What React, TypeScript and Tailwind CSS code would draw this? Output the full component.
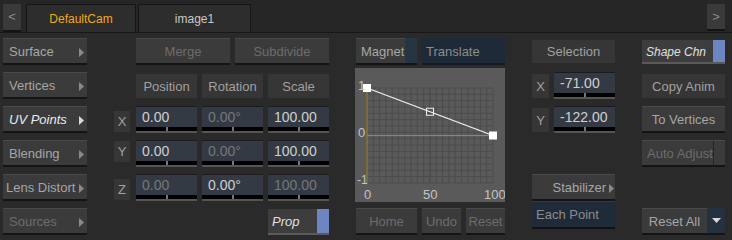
import React from 'react';

const FONT = {fontFamily: '"Liberation Sans", Arial, sans-serif'};

function Arrow({color = '#8a8a8a'}: {color?: string}) {
  return (
    <svg width="5" height="9" viewBox="0 0 5 9" aria-hidden="true">
      <polygon points="0,0 5,4.5 0,9" fill={color} />
    </svg>
  );
}

// raised grey push button
function Btn({
  label,
  className = '',
  arrow,
  italic,
  dim,
}: {
  label: string;
  className?: string;
  arrow?: boolean;
  italic?: boolean;
  dim?: boolean;
}) {
  return (
    <div
      className={`h-[27px] flex items-center pt-[2px] bg-[#3b3b3b] border-t border-t-[#4a4a4a] border-b-2 border-b-[#141414] text-[13px] ${
        arrow ? 'justify-between pl-[6px] pr-[3px]' : 'justify-center'
      } ${italic ? 'italic text-[#ececec]' : dim ? 'text-[#6c6c6c]' : 'text-[#a6a6a6]'} ${className}`}
    >
      <span className="whitespace-nowrap">{label}</span>
      {arrow && <Arrow color={italic ? '#d8d8d8' : '#8a8a8a'} />}
    </div>
  );
}

function Label({label, className = ''}: {label: string; className?: string}) {
  return (
    <div
      className={`flex items-center justify-center pt-[1px] bg-[#363636] text-[13px] text-[#a0a0a0] whitespace-nowrap ${className}`}
    >
      {label}
    </div>
  );
}

function Field({value, dim}: {value: string; dim?: boolean}) {
  return (
    <div className="h-[27px] flex flex-col">
      <div className="h-[1px] bg-[#1c1c1c]" />
      <div
        className={`h-[20px] bg-[#343a44] flex items-center pl-[6px] text-[14px] ${
          dim ? 'text-[#767676]' : 'text-[#cfcfcf]'
        }`}
      >
        {value}
      </div>
      <div className="h-[4px] bg-black flex justify-center">
        <div className="w-[2px] h-full bg-[#777]" />
      </div>
      <div className="h-[2px] bg-[#555]" />
    </div>
  );
}

function Toggle({label, className = ''}: {label: string; className?: string}) {
  return (
    <div className={`flex border-b-2 border-b-[#5a5a5a] ${className}`}>
      <div className="flex-1 bg-[#3d3d3d] flex items-center pl-[4px] pt-[1px] italic text-[#e0e0e0] whitespace-nowrap">
        {label}
      </div>
      <div className="w-[12px] bg-[#6d86c2]" />
    </div>
  );
}

function Graph() {
  const x0 = 12;
  const x1 = 138;
  const y0 = 20;
  const y1 = 115;
  const cols = 20;
  const rows = 15;
  const vlines = Array.from({length: cols + 1}, (_, i) => x0 + ((x1 - x0) * i) / cols);
  const hlines = Array.from({length: rows + 1}, (_, i) => y0 + ((y1 - y0) * i) / rows);
  const yZero = (y0 + y1) / 2;
  return (
    <svg width="150" height="134" viewBox="0 0 150 134" className="block bg-[#5a5a5a]">
      {vlines.map((x, i) => (
        <line key={`v${i}`} x1={x} y1={y0} x2={x} y2={y1} stroke={i === 10 ? '#444' : '#4c4c4c'} strokeWidth="1" />
      ))}
      {hlines.map((y, i) => (
        <line key={`h${i}`} x1={x0} y1={y} x2={x1} y2={y} stroke="#4c4c4c" strokeWidth="1" />
      ))}
      <line x1={x0} y1={y0} x2={x0} y2={y1} stroke="#a5862f" strokeWidth="1" />
      <line x1={x0} y1={yZero} x2={x1} y2={yZero} stroke="#a5862f" strokeWidth="1" />
      <line x1={x0} y1={y0} x2={x1} y2={yZero} stroke="#f2f2f2" strokeWidth="1.3" />
      <rect x={x0 - 4} y={y0 - 4} width="8" height="8" fill="#fff" />
      <rect x={x1 - 4} y={yZero - 4} width="8" height="8" fill="#fff" />
      <rect x={(x0 + x1) / 2 - 3.5} y={(y0 + yZero) / 2 - 3.5} width="7" height="7" fill="none" stroke="#eee" strokeWidth="1" />
      <g fill="#c4c4c4" fontSize="13" style={FONT}>
        <text x="3" y="22">1</text>
        <text x="3" y={yZero + 1}>0</text>
        <text x="2" y={y1 + 1} fontSize="12">-1</text>
        <text x="9" y="131">0</text>
        <text x="68" y="131">50</text>
        <text x="129" y="131">100</text>
      </g>
    </svg>
  );
}

export default function App() {
  return (
    <div className="w-[732px] h-[240px] bg-[#2a2a2a] overflow-hidden" style={FONT}>
      {/* Tab bar */}
      <div className="h-[33px] bg-[#262626] border-b border-b-[#181818] flex items-end pl-[3px] pr-[7px]">
        <div className="w-[18px] h-[28px] bg-[#3a3a3a] border-b-2 border-b-[#141414] flex items-center justify-center text-[13px] text-[#8a8a8a]">
          &lt;
        </div>
        <div className="ml-[5px] w-[110px] h-[28px] bg-[#2d2d2d] border border-b-0 border-[#151515] flex items-center justify-center text-[12px] text-[#f0a81c]">
          DefaultCam
        </div>
        <div className="ml-[2px] w-[113px] h-[28px] bg-[#2d2d2d] border border-b-0 border-[#151515] flex items-center justify-center text-[12px] text-[#c8c8c8]">
          image1
        </div>
        <div className="ml-auto mb-[1px] w-[18px] h-[27px] bg-[#3a3a3a] border-b-2 border-b-[#141414] flex items-center justify-center text-[13px] text-[#8a8a8a]">
          &gt;
        </div>
      </div>

      <div className="flex items-start pt-[5px]">
        {/* Column 1 */}
        <div className="ml-[3px] w-[84px] flex flex-col gap-[7px]">
          <Btn label="Surface" arrow />
          <Btn label="Vertices" arrow />
          <Btn label="UV Points" arrow italic />
          <Btn label="Blending" arrow />
          <Btn label="Lens Distort" arrow className="!pl-[3px]" />
          <Btn label="Sources" arrow dim />
        </div>

        {/* Column 2 */}
        <div className="ml-[27px] w-[215px] grid grid-cols-[17px_61px_61px_61px] gap-x-[5px] gap-y-[7px] auto-rows-[27px]">
          <div />
          <div className="col-span-3 flex gap-[5px]">
            <Btn label="Merge" dim className="flex-1" />
            <Btn label="Subdivide" dim className="flex-1" />
          </div>

          <div />
          <Label label="Position" className="mt-[2px] h-[24px]" />
          <Label label="Rotation" className="mt-[2px] h-[24px]" />
          <Label label="Scale" className="mt-[2px] h-[24px]" />

          <Label label="X" className="mt-[5px] h-[21px] w-[16px]" />
          <Field value="0.00" />
          <Field value="0.00°" dim />
          <Field value="100.00" />

          <Label label="Y" className="mt-[1px] h-[21px] w-[16px]" />
          <Field value="0.00" />
          <Field value="0.00°" dim />
          <Field value="100.00" />

          <Label label="Z" className="mt-[5px] h-[21px] w-[16px]" />
          <Field value="0.00" dim />
          <Field value="0.00°" />
          <Field value="100.00" dim />

          <div />
          <div />
          <div />
          <Toggle label="Prop" className="mt-[1px] h-[26px] text-[13px]" />
        </div>

        {/* Column 3 */}
        <div className="ml-[26px] w-[150px] flex flex-col">
          <div className="flex gap-[5px] pl-[1px]">
            <div className="w-[61px] flex">
              <Btn label="Magnet" className="w-[49px] !justify-start pl-[5px]" />
              <div className="flex-1 h-[27px] bg-[#263444] border-b-2 border-b-[#141414]" />
            </div>
            <div className="flex-1 h-[27px] pt-[2px] bg-[#1f2a38] border-b-2 border-b-[#141a22] flex items-center pl-[4px] text-[13px] text-[#8c8c8c]">
              Translate
            </div>
          </div>
          <div className="mt-[3px]">
            <Graph />
          </div>
          <div className="mt-[6px] flex gap-[5px] pl-[1px]">
            <Btn label="Home" dim className="w-[61px]" />
            <Btn label="Undo" dim className="w-[39px]" />
            <Btn label="Reset" dim className="w-[39px]" />
          </div>
        </div>

        {/* Column 4 */}
        <div className="ml-[27px] w-[83px] flex flex-col">
          <Label label="Selection" className="mt-[2px] h-[23px]" />
          <div className="mt-[9px] flex gap-[5px]">
            <Label label="X" className="mt-[2px] h-[24px] w-[17px]" />
            <div className="flex-1">
              <Field value="-71.00" />
            </div>
          </div>
          <div className="mt-[7px] flex gap-[5px]">
            <Label label="Y" className="mt-[2px] h-[24px] w-[17px]" />
            <div className="flex-1">
              <Field value="-122.00" />
            </div>
          </div>
          <Btn label="Stabilizer" arrow className="mt-[41px] !justify-end gap-[3px] !pr-[1px]" />
          <div className="h-[28px] pt-[1px] bg-[#1f2b39] border-t border-t-[#2c3a4a] border-b-2 border-b-[#111] flex items-center pl-[4px] text-[13px] text-[#8c8c8c]">
            Each Point
          </div>
        </div>

        {/* Column 5 */}
        <div className="ml-[27px] w-[83px] flex flex-col">
          <Toggle label="Shape Chn" className="mt-[2px] h-[24px] text-[12px]" />
          <Label label="Copy Anim" className="mt-[10px] h-[24px]" />
          <Btn label="To Vertices" className="mt-[8px]" />
          <div className="mt-[7px] flex">
            <Btn label="Auto Adjust" dim className="flex-1 !justify-start pl-[5px]" />
            <div className="w-[13px] h-[27px] bg-[#3b3b3b] border-t border-t-[#4a4a4a] border-b-2 border-b-[#141414] border-l border-l-[#252525]" />
          </div>
          <div className="mt-[41px] flex">
            <Btn label="Reset All" className="flex-1" />
            <div className="w-[18px] h-[27px] bg-[#25313f] border-b-2 border-b-[#141414] flex items-center justify-center">
              <svg width="9" height="5" viewBox="0 0 9 5" aria-hidden="true">
                <polygon points="0,0 9,0 4.5,5" fill="#d8d8d8" />
              </svg>
            </div>
          </div>
        </div>
      </div>
    </div>
  );
}
